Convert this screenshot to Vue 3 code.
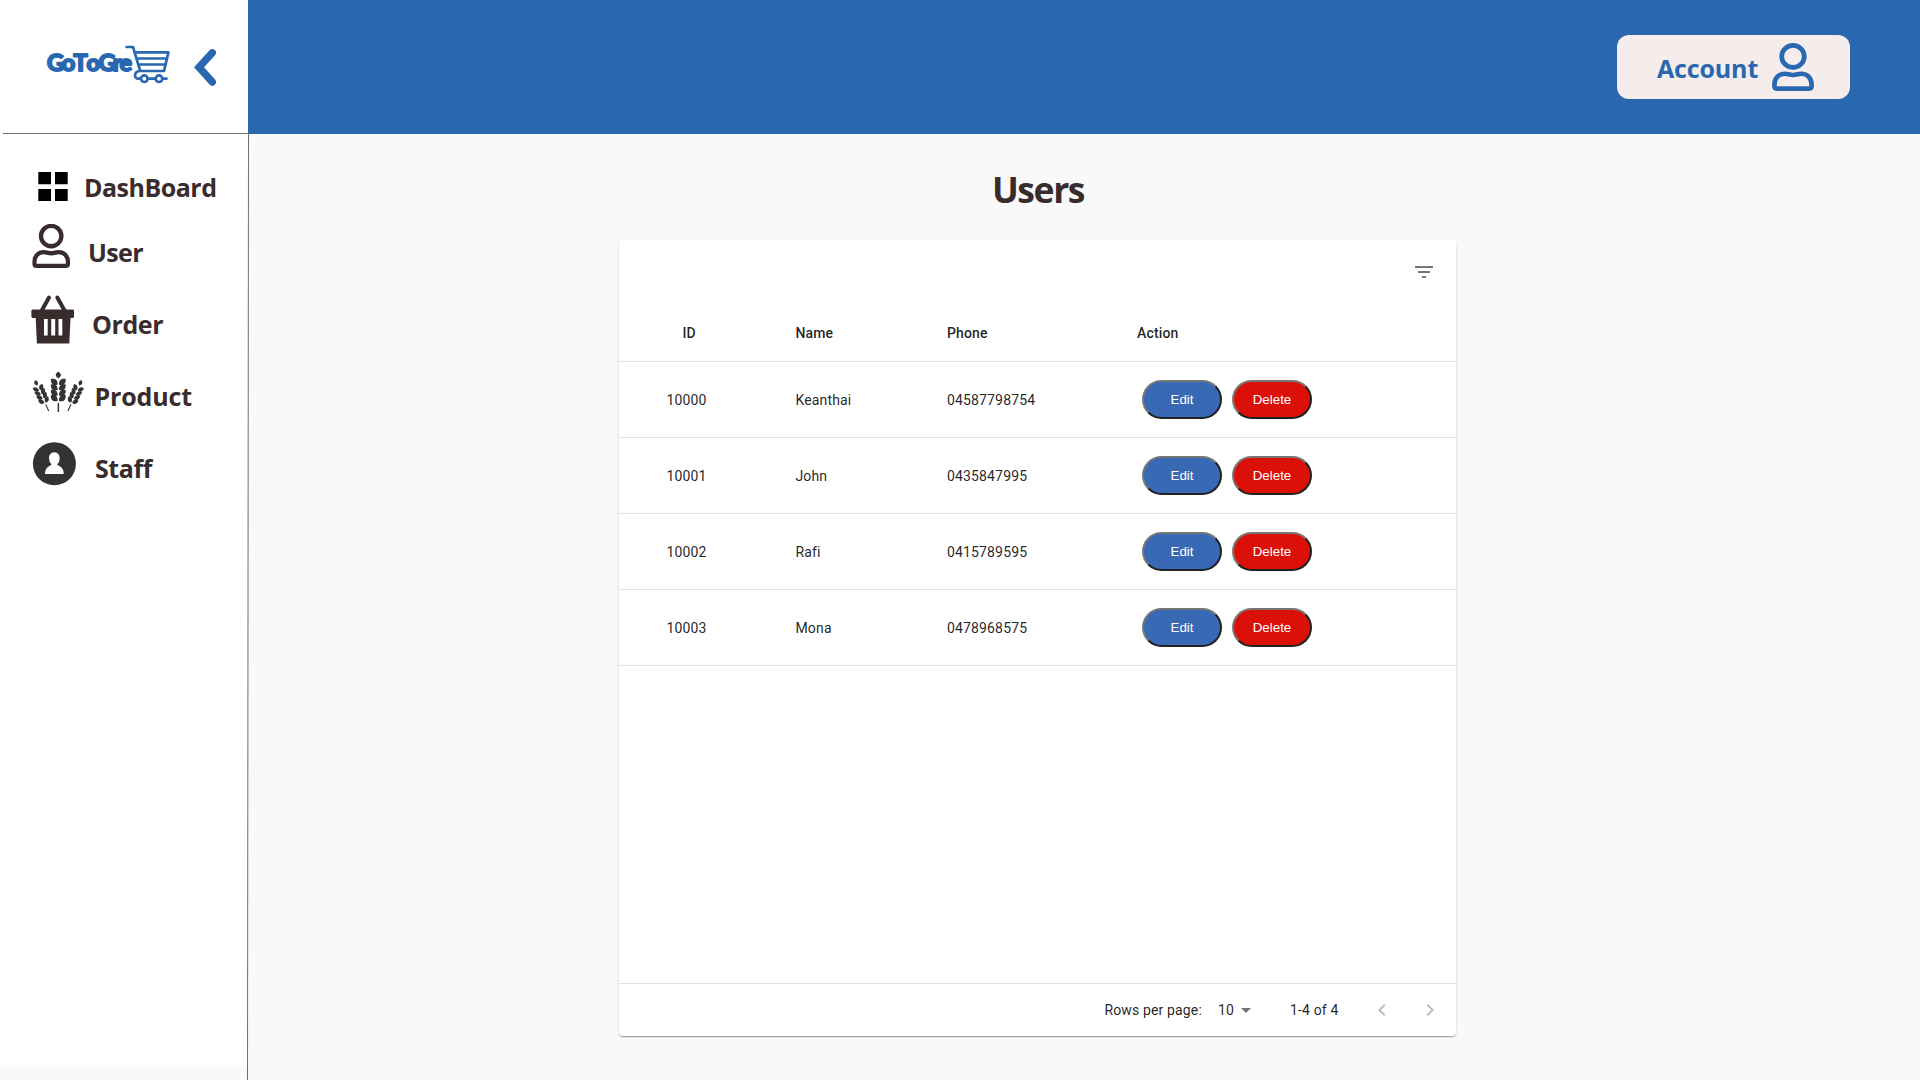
<script setup>
const users = [
  { id: 10000, name: 'Keanthai', phone: '04587798754' },
  { id: 10001, name: 'John', phone: '0435847995' },
  { id: 10002, name: 'Rafi', phone: '0415789595' },
  { id: 10003, name: 'Mona', phone: '0478968575' },
]
const grains = [8.6, 14, 19.4, 24.8]
</script>

<template>
  <div class="app">
    <svg width="0" height="0" class="defs">
      <symbol id="person" viewBox="0 0 38 44.4" preserveAspectRatio="none">
        <g fill="none" stroke="currentColor" stroke-width="4.3">
          <circle cx="19" cy="12.4" r="10.2" />
          <path d="M4.5 42.2Q2.2 42.2 2.2 39.8V38.5C2.2 32.5 6 28.4 11.5 28.4C14.5 28.4 15.5 29.6 19 29.6C22.5 29.6 23.5 28.4 26.5 28.4C32 28.4 35.8 32.5 35.8 38.5V39.8Q35.8 42.2 33.5 42.2Z" />
        </g>
      </symbol>
      <symbol id="ear" viewBox="0 0 18 42" overflow="visible">
        <path d="M9 0C12.4 2.4 12.4 4.6 9 7C5.6 4.6 5.6 2.4 9 0Z" />
        <g v-for="y in grains" :key="y">
          <path :d="`M8.3 ${y + 4.6}C4 ${y + 6.2} 1.2 ${y + 3.6} 1.6 ${y - 1}C5.6 ${y - 2} 8.6 ${y} 8.3 ${y + 4.6}Z`" />
          <path :d="`M9.700 ${y + 4.6}C14 ${y + 6.2} 16.8 ${y + 3.6} 16.4 ${y - 1}C12.4 ${y - 2} 9.4 ${y} 9.7 ${y + 4.6}Z`" />
        </g>
        <path d="M8.3 31.5h1.5v9H8.3z" />
      </symbol>
    </svg>

    <aside class="sidebar">
      <div class="brand">
        <svg width="248" height="133" viewBox="0 0 248 133">
          <g class="wordmark">
            <text y="70.8" x="47 61.8 73.6 86.4 98.4 112.8 119.6">GoToGre</text>
          </g>
          <g fill="none" stroke="#2967b1" stroke-width="2.7" stroke-linecap="round" stroke-linejoin="round">
            <path d="M126.6 47H133L140.2 70.8M135 52.4H168.4L164 71H139C134 72 133.5 78.5 138.5 78.7H166.5M137 58.5H166.5M139 64.5H165" />
            <circle cx="144.3" cy="78.7" r="3.3" fill="#fff" />
            <circle cx="159" cy="78.7" r="3.3" fill="#fff" />
          </g>
          <path d="M212.3 52.8L199 67.3L212.3 82" fill="none" stroke="#2967b1" stroke-width="7.4" stroke-linecap="round" stroke-linejoin="miter" />
        </svg>
      </div>

      <nav class="menu">
        <a class="item dashboard">
          <svg width="84" height="65" viewBox="0 156 84 65">
            <path d="M38.3 172H51V184.2H38.3zM55 172H67.7V184.2H55zM38.3 189H51V201H38.3zM55 189H67.7V201H55z" fill="#000" />
          </svg>
          <span>DashBoard</span>
        </a>
        <a class="item user">
          <svg width="88" height="72" viewBox="0 221 88 72">
            <use href="#person" x="32.2" y="223.7" width="38" height="44.3" />
          </svg>
          <span>User</span>
        </a>
        <a class="item order">
          <svg width="92" height="72" viewBox="0 293 92 72">
            <path d="M49 297.5L41.5 311M57.3 297.5L64.8 311" stroke="currentColor" stroke-width="4" stroke-linecap="round" />
            <path fill="currentColor" fill-rule="evenodd" d="M32.5 309.5H73L74 310.5V317L73 318H70.5L69.3 343.6H36.9L35.7 318H32.5L31.4 317V310.5zM44 319V335.5H47.7V319zM51.2 319V335.5H55.2V319zM58.5 319V335.5H62.3V319z" />
          </svg>
          <span>Order</span>
        </a>
        <a class="item product">
          <svg width="94.5" height="72" viewBox="0 365 94.5 72" fill="#333">
            <use href="#ear" x="49.3" y="371.5" width="18" height="42" />
            <g transform="translate(35 380.3) rotate(-24) scale(.72 .83)"><use href="#ear" x="-9" y="0" width="18" height="42" /></g>
            <g transform="translate(81.6 380.3) rotate(24) scale(.72 .83)"><use href="#ear" x="-9" y="0" width="18" height="42" /></g>
          </svg>
          <span>Product</span>
        </a>
        <a class="item staff">
          <svg width="95" height="72" viewBox="0 437 95 72">
            <circle cx="54.4" cy="463.7" r="21.5" fill="#333" />
            <path fill="#fff" d="M54.3 452.3C58 452.3 60 455.3 59.6 459C59.4 461.5 58.5 463.2 57.2 464.3C57.2 466 63.8 466 63.8 474H45C45 466 51.5 466 51.5 464.3C50.2 463.2 49.3 461.5 49.1 459C48.7 455.3 50.7 452.3 54.3 452.3Z" />
          </svg>
          <span>Staff</span>
        </a>
      </nav>
    </aside>

    <div class="main">
      <header class="topbar">
        <button class="account">
          <span>Account</span>
          <svg width="42" height="48"><use href="#person" width="42" height="48" /></svg>
        </button>
      </header>

      <h1>Users</h1>

      <section class="card">
        <div class="toolbar">
          <svg width="24" height="24" viewBox="0 0 24 24" fill="#757575"><path d="M10 18h4v-2h-4v2zM3 6v2h18V6H3zm3 7h12v-2H6v2z" /></svg>
        </div>
        <div class="row head">
          <span class="id">ID</span><span>Name</span><span>Phone</span><span>Action</span>
        </div>
        <div v-for="u in users" :key="u.id" class="row">
          <span class="id">{{ u.id }}</span>
          <span>{{ u.name }}</span>
          <span>{{ u.phone }}</span>
          <span class="actions">
            <button class="pill edit">Edit</button>
            <button class="pill delete">Delete</button>
          </span>
        </div>
        <footer class="pager">
          <span class="label">Rows per page:</span>
          <span class="size">10</span>
          <svg class="caret" width="24" height="24" viewBox="0 0 24 24" fill="#757575"><path d="M7 10l5 5 5-5z" /></svg>
          <span class="range">1-4 of 4</span>
          <svg class="prev" width="24" height="24" viewBox="0 0 24 24" fill="#bdbdbd"><path d="M15.41 16.59L10.83 12l4.58-4.59L14 6l-6 6 6 6 1.41-1.41z" /></svg>
          <svg class="next" width="24" height="24" viewBox="0 0 24 24" fill="#bdbdbd"><path d="M8.59 16.59L13.17 12 8.59 7.41 10 6l6 6-6 6-1.41-1.41z" /></svg>
        </footer>
      </section>
    </div>

    <svg class="rules" width="260" height="1080" viewBox="0 0 260 1080" stroke="#707070">
      <path d="M3 133.5H250M248.5 134L247.5 1080" />
    </svg>
  </div>
</template>

<style>
body {
  margin: 0;
  background: #f9f9f9;
}
</style>

<style scoped>
.app {
  position: relative;
  display: flex;
  width: 1920px;
  height: 1080px;
  overflow: hidden;
  background: #f9f9f9;
  color: #392c2c;
  font-family: 'Open Sans', 'Noto Sans', sans-serif;
}
.defs {
  position: absolute;
}
svg {
  display: block;
  flex: none;
}
.rules {
  position: absolute;
  top: 0;
  left: 0;
  pointer-events: none;
}
.sidebar {
  width: 248px;
  height: 1067px;
  flex: none;
  background: #fff;
}
.brand {
  height: 133px;
}
.wordmark text {
  font: 700 23.5px Lato, sans-serif;
  fill: #2967b1;
  stroke: #2967b1;
  stroke-width: 2px;
  stroke-linejoin: round;
}
.menu {
  padding-top: 23px;
}
.item {
  display: flex;
  height: 72px;
}
.item.dashboard {
  height: 65px;
}
.item span {
  font-size: 25px;
  font-weight: 700;
  line-height: 62px;
  letter-spacing: -0.4px;
  white-space: nowrap;
}
.item.dashboard span {
  letter-spacing: -0.5px;
}
.item.user span {
  letter-spacing: -0.6px;
}
.item.product span {
  letter-spacing: -0.15px;
}
.main {
  flex: 1;
  display: flex;
  flex-direction: column;
  align-items: center;
}
.topbar {
  align-self: stretch;
  height: 134px;
  background: #2967b1;
  display: flex;
  justify-content: flex-end;
  align-items: center;
  box-sizing: border-box;
  padding-right: 70px;
}
.account {
  width: 233px;
  height: 64px;
  box-sizing: border-box;
  padding: 0 36px 0 40px;
  border: 0;
  border-radius: 12px;
  background: #f5ecec;
  color: #2967b1;
  display: flex;
  align-items: center;
  justify-content: space-between;
  font: 700 25px 'Open Sans', 'Noto Sans', sans-serif;
}
.account span {
  padding-top: 2px;
  letter-spacing: -0.15px;
}
h1 {
  margin: 32px 92px 0 0;
  height: 74px;
  font-size: 35.5px;
  font-weight: 700;
  line-height: 46px;
  letter-spacing: -1.4px;
}
.card {
  width: 837px;
  height: 796px;
  margin-right: 93px;
  display: flex;
  flex-direction: column;
  background: #fff;
  border-radius: 4px;
  box-shadow: 0 2px 1px -1px rgba(0, 0, 0, 0.2), 0 1px 1px 0 rgba(0, 0, 0, 0.14), 0 1px 3px 0 rgba(0, 0, 0, 0.12);
  color: rgba(0, 0, 0, 0.87);
  font: 400 14px Roboto, sans-serif;
  letter-spacing: 0.15px;
}
.toolbar {
  height: 65px;
  display: flex;
  align-items: flex-start;
  justify-content: flex-end;
  box-sizing: border-box;
  padding: 20px 20px 0 0;
}
.row {
  display: grid;
  grid-template-columns: 176.5px 151.5px 190px 1fr;
  align-items: center;
  height: 75px;
  border-bottom: 1px solid #e0e0e0;
}
.row.head {
  height: 56px;
  font-weight: 500;
}
.row .id {
  padding-left: 47.5px;
}
.head .id {
  padding-left: 63.5px;
}
.actions {
  display: flex;
  gap: 10px;
  padding-left: 5px;
}
.pill {
  width: 80px;
  height: 39px;
  box-sizing: border-box;
  padding: 0;
  border: 2px solid;
  border-color: #767676 #212121 #212121 #767676;
  border-radius: 20px;
  color: #fff;
  font: 13.33px 'Liberation Sans', Arial, sans-serif;
}
.edit {
  background: #3769b5;
}
.delete {
  background: #db1109;
}
.pager {
  margin-top: auto;
  height: 52px;
  border-top: 1px solid #e0e0e0;
  display: flex;
  align-items: center;
  justify-content: flex-end;
}
.label {
  margin-right: 16px;
}
.size {
  margin-top: -1px;
}
.caret {
  margin-right: 32px;
}
.range {
  margin-right: 31.5px;
}
.prev {
  margin-right: 24px;
}
.next {
  margin-right: 14px;
}
</style>
